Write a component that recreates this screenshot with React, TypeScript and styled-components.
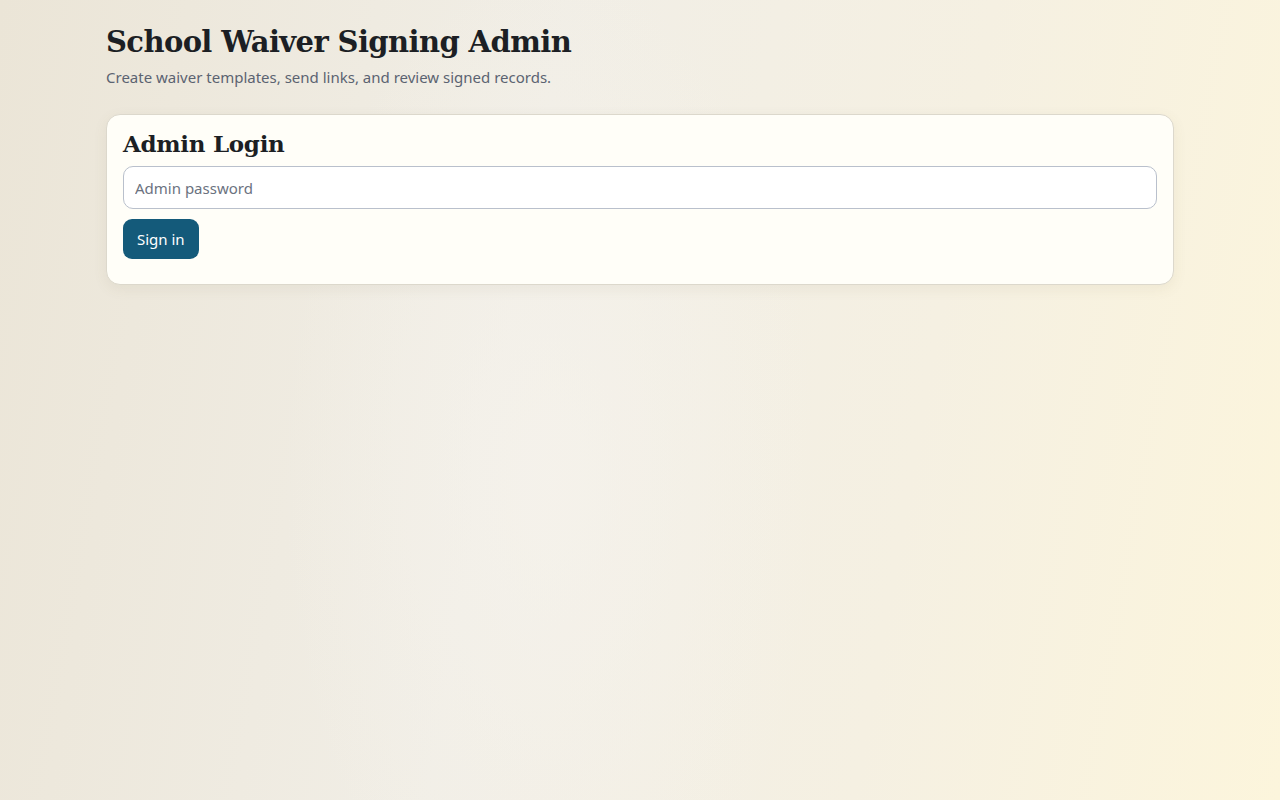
import React from "react";
import styled, { createGlobalStyle } from "styled-components";

const Global = createGlobalStyle`
  html, body { margin: 0; padding: 0; }
  body {
    min-height: 100vh;
    font-family: "Noto Sans", "Open Sans", sans-serif;
    color: #1f2328;
    background:
      radial-gradient(ellipse 360px 700px at 43% 60%, rgba(246,243,237,0.7), rgba(246,243,237,0) 75%),
      linear-gradient(100deg, #ebe5d7 0%, #f1eee6 40%, #f5f0e2 70%, #fcf5dc 100%);
  }
`;

const Page = styled.main`
  max-width: 1068px;
  margin: 0 auto;
  padding: 22px 0 40px;
  box-sizing: border-box;
`;

const Title = styled.h1`
  font-family: "DejaVu Serif", Georgia, serif;
  font-weight: 700;
  font-size: 29px;
  letter-spacing: -0.6px;
  margin: 0;
  line-height: 40px;
  color: #1c1f24;
`;

const Subtitle = styled.p`
  margin: 4px 0 0;
  font-size: 15px;
  line-height: 22px;
  color: #5b6371;
`;

const Card = styled.section`
  margin-top: 26px;
  background: #fffef8;
  border: 1px solid #dcd8cc;
  border-radius: 14px;
  box-shadow: 0 4px 14px rgba(120, 100, 60, 0.08);
  padding: 13px 16px 25px;
  display: flex;
  flex-direction: column;
  gap: 10px;
`;

const CardTitle = styled.h2`
  font-family: "DejaVu Serif", Georgia, serif;
  font-weight: 700;
  font-size: 23px;
  letter-spacing: -0.3px;
  line-height: 32px;
  margin: 0 0 -4px;
  color: #1c1f24;
`;

const Input = styled.input`
  box-sizing: border-box;
  width: 100%;
  height: 43px;
  border: 1px solid #b9c0cc;
  border-radius: 10px;
  background: #fff;
  padding: 0 11px;
  font-family: "Noto Sans", sans-serif;
  font-size: 15px;
  color: #1f2328;
  &::placeholder { color: #6b7280; }
  outline: none;
`;

const Button = styled.button`
  align-self: flex-start;
  height: 40px;
  padding: 0 14px;
  border: none;
  border-radius: 9px;
  background: #145a7a;
  color: #fff;
  font-family: "Noto Sans", sans-serif;
  font-size: 15px;
  cursor: pointer;
`;

export default function App() {
  return (
    <>
      <Global />
      <Page>
        <Title>School Waiver Signing Admin</Title>
        <Subtitle>Create waiver templates, send links, and review signed records.</Subtitle>
        <Card>
          <CardTitle>Admin Login</CardTitle>
          <Input type="password" placeholder="Admin password" />
          <Button>Sign in</Button>
        </Card>
      </Page>
    </>
  );
}
